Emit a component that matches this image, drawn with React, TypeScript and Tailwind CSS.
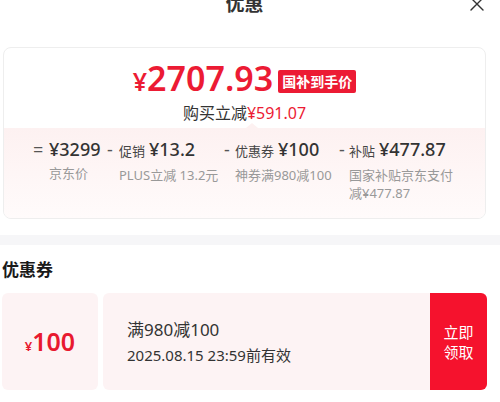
const font = "font-['Noto_Sans','Noto_Sans_CJK_SC',sans-serif]";

const parts = [
  { sign: "=", label: "", value: "¥3299", lines: ["京东价"], w: "w-[74px]", sw: "w-[16px]" },
  { sign: "-", label: "促销", value: "¥13.2", lines: ["PLUS立减 13.2元"], w: "w-[117px]", sw: "w-[12px]" },
  { sign: "-", label: "优惠券", value: "¥100", lines: ["神券满980减100"], w: "w-[115px]", sw: "w-[11px]" },
  { sign: "-", label: "补贴", value: "¥477.87", lines: ["国家补贴京东支付", "减¥477.87"], w: "w-[120px]", sw: "w-[10px]" },
];

export default function App() {
  return (
    <div className={`h-[402px] w-[500px] overflow-hidden bg-white ${font}`}>
      <div className="pl-[2px] pr-[13px]">
        {/* header */}
        <div className="-mt-[14px] flex h-[36px] items-center justify-between">
          <div className="w-[16px]" />
          <h1 className="pl-[2px] text-[19px] font-bold text-[#333]">优惠</h1>
          <svg width="16" height="16" viewBox="0 0 16 16" className="mr-[2px]">
            <path d="M2 2 L14 14 M14 2 L2 14" stroke="#333" strokeWidth="1.4" strokeLinecap="round" />
          </svg>
        </div>

        {/* price card */}
        <div className="mx-[1px] mt-[25px] overflow-hidden rounded-[8px] border border-[#eeeeee] bg-white">
          <div className="pt-[13px] pb-[5px]">
            <div className="flex items-center justify-center">
              <span className="flex items-baseline font-semibold leading-[34px] text-[#ec1b34]">
                <span className="text-[25px]">¥</span>
                <span className="text-[34px]">2707.93</span>
              </span>
              <span className="mt-[3px] ml-[5px] rounded-[2px] bg-[#ec1b34] px-[4px] text-[14px] font-bold leading-[23px] text-white">
                国补到手价
              </span>
            </div>
            <p className="mt-[5px] text-center text-[16px] leading-[20px] text-[#333]">
              购买立减<span className="text-[#ec1b34]">¥591.07</span>
            </p>
          </div>
          <div className="relative bg-gradient-to-b from-[#fdf1f1] to-[#fffbfb] pt-[9px] pb-[16px] pl-[29px]">
            <span className="absolute -top-[5px] left-[242px] h-0 w-0 border-r-[6px] border-b-[5px] border-l-[6px] border-r-transparent border-b-[#fdf1f1] border-l-transparent" />
            <div className="flex">
              {parts.map((p) => (
                <div key={p.value} className={`flex ${p.w}`}>
                  <span className={`${p.sw} text-[18px] leading-[24px] text-[#555]`}>{p.sign}</span>
                  <div>
                    <div className="flex items-baseline whitespace-nowrap leading-[24px]">
                      {p.label && <span className="mr-[4px] text-[13px] text-[#444]">{p.label}</span>}
                      <span className="text-[18px] font-medium text-[#333]">{p.value}</span>
                    </div>
                    <div className="mt-[3px] text-[13px] leading-[18px] whitespace-nowrap text-[#999]">
                      {p.lines.map((l) => (
                        <div key={l}>{l}</div>
                      ))}
                    </div>
                  </div>
                </div>
              ))}
            </div>
          </div>
        </div>
      </div>

      {/* divider band */}
      <div className="mt-[16px] h-[10px] bg-[#f6f6f8]" />

      <div className="pl-[2px] pr-[13px]">
        <h2 className="mt-[13px] text-[17px] font-bold leading-[24px] text-[#1a1a1a]">优惠券</h2>

        <div className="mt-[11px] flex h-[97px] gap-[5px]">
          <div className="flex w-[96px] items-center justify-center rounded-[6px] bg-[#fdf3f4] font-semibold text-[#e8192f]">
            <span className="flex items-baseline">
              <span className="text-[13px]">¥</span>
              <span className="text-[25px] leading-[30px]">100</span>
            </span>
          </div>
          <div className="flex flex-1 overflow-hidden rounded-[6px] bg-[#fdf3f4]">
            <div className="flex flex-1 flex-col justify-center pl-[24px] text-[#333]">
              <p className="text-[17px] leading-[24px]">满980减100</p>
              <p className="mt-[2px] text-[15px] leading-[22px]">2025.08.15 23:59前有效</p>
            </div>
            <button className="flex w-[57px] flex-col items-center justify-center bg-[#f5122d] text-[15px] leading-[20px] text-white">
              <span>立即</span>
              <span>领取</span>
            </button>
          </div>
        </div>
      </div>
    </div>
  );
}
